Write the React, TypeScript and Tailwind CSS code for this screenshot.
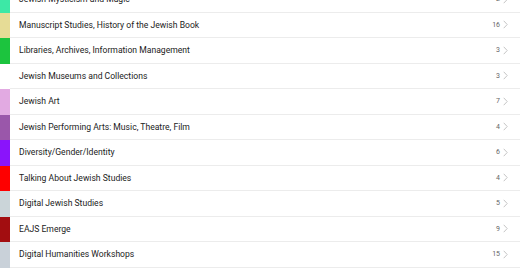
import React from 'react';

const topics = [
  { name: 'Jewish Mysticism and Magic', count: 2, color: 'bg-[#3de8a6]' },
  { name: 'Manuscript Studies, History of the Jewish Book', count: 16, color: 'bg-[#e6dc96]' },
  { name: 'Libraries, Archives, Information Management', count: 3, color: 'bg-[#1cc43e]' },
  { name: 'Jewish Museums and Collections', count: 3, color: 'bg-white' },
  { name: 'Jewish Art', count: 7, color: 'bg-[#e2aae2]' },
  { name: 'Jewish Performing Arts: Music, Theatre, Film', count: 4, color: 'bg-[#9a57aa]' },
  { name: 'Diversity/Gender/Identity', count: 6, color: 'bg-[#8a14fb]' },
  { name: 'Talking About Jewish Studies', count: 4, color: 'bg-[#fe0000]' },
  { name: 'Digital Jewish Studies', count: 5, color: 'bg-[#cbd5d9]' },
  { name: 'EAJS Emerge', count: 9, color: 'bg-[#a20d10]' },
  { name: 'Digital Humanities Workshops', count: 15, color: 'bg-[#c9d1d9]' },
];

export default function App() {
  return (
    <div className="w-[520px] h-[272px] overflow-hidden bg-white" style={{ fontFamily: 'Roboto, "Liberation Sans", sans-serif' }}>
      <div className="-mt-[13px]">
        {topics.map((t, idx) => (
          <div key={idx} className="flex h-[25.5px]">
            <div className={`w-[10px] shrink-0 ${t.color}`} />
            <div className="flex flex-1 items-center border-b border-[#ececec] pl-[9px] pr-[12px]">
              <span className="flex-1 text-[8.6px] text-[#222] pt-[1px]">{t.name}</span>
              <span className="text-[7px] text-[#666] mr-[3px]">{t.count}</span>
              <svg width="5" height="9" viewBox="0 0 5 9" fill="none">
                <path d="M0.7 0.8 L4.2 4.5 L0.7 8.2" stroke="#c4c4c4" strokeWidth="1" />
              </svg>
            </div>
          </div>
        ))}
      </div>
    </div>
  );
}
